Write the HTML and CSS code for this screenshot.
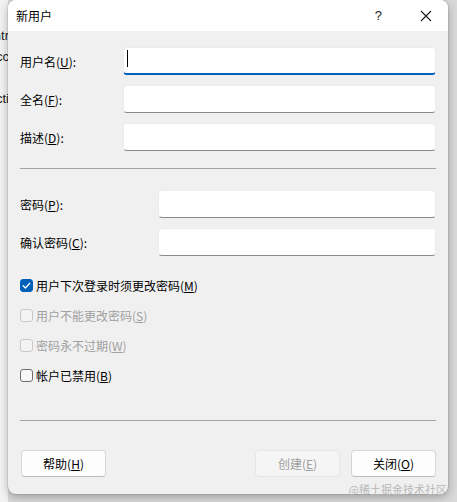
FILE: index.html
```html
<!DOCTYPE html>
<html lang="zh">
<head>
<meta charset="utf-8">
<link rel="stylesheet" href="styles.css">
</head>
<body>
<div class="stage">
  <div class="behind">
    <div class="frag f1"><span>Contr</span></div>
    <div class="frag f2"><span>Acc</span></div>
    <div class="frag f3"><span>Acti</span></div>
  </div>
  <div class="dialog">
    <div class="titlebar">
      <span class="title">新用户</span>
      <span class="help-q">?</span>
      <svg class="close" width="12" height="12" viewBox="0 0 12 12"><path d="M1 1L11 11M11 1L1 11" stroke="#1a1a1a" stroke-width="1.1" fill="none"/></svg>
    </div>
    <div class="body">
      <div class="fields">
        <div class="row"><label class="lbl">用户名(<u>U</u>):</label><div class="input focus"><span class="caret"></span></div></div>
        <div class="row"><label class="lbl">全名(<u>F</u>):</label><div class="input"></div></div>
        <div class="row"><label class="lbl">描述(<u>D</u>):</label><div class="input"></div></div>
      </div>
      <div class="sep sep1"></div>
      <div class="fields pw">
        <div class="row"><label class="lbl">密码(<u>P</u>):</label><div class="input"></div></div>
        <div class="row"><label class="lbl">确认密码(<u>C</u>):</label><div class="input"></div></div>
      </div>
      <div class="checks">
        <div class="chk"><span class="box checked"><svg width="11" height="11" viewBox="0 0 11 11"><path d="M2.2 5.8L4.4 8L8.8 3.2" stroke="#fff" stroke-width="1.3" fill="none" stroke-linecap="round" stroke-linejoin="round"/></svg></span><span>用户下次登录时须更改密码(<u>M</u>)</span></div>
        <div class="chk disabled"><span class="box"></span><span>用户不能更改密码(<u>S</u>)</span></div>
        <div class="chk disabled"><span class="box"></span><span>密码永不过期(<u>W</u>)</span></div>
        <div class="chk"><span class="box"></span><span>帐户已禁用(<u>B</u>)</span></div>
      </div>
      <div class="sep sep2"></div>
      <div class="buttons">
        <button class="btn">帮助(<u>H</u>)</button>
        <div class="spacer"></div>
        <button class="btn disabled">创建(<u>E</u>)</button>
        <button class="btn">关闭(<u>O</u>)</button>
      </div>
    </div>
  </div>
</div>
<div class="watermark">@稀土掘金技术社区</div>
</body>
</html>
```
FILE: styles.css
```css
html, body {
  margin: 0;
  padding: 0;
}
body {
  width: 457px;
  height: 502px;
  overflow: hidden;
  background: #d9d9d9;
  font-family: "Noto Sans CJK SC", "Noto Sans", sans-serif;
  font-size: 12px;
  color: #1a1a1a;
  position: relative;
}
.stage {
  display: flex;
  height: 502px;
}
.behind {
  width: 8px;
  flex: none;
  background: #f3f3f3;
  overflow: hidden;
  font-family: "Liberation Sans", sans-serif;
  font-size: 13px;
  line-height: 17px;
  color: #222;
}
.frag {
  display: flex;
  justify-content: flex-end;
  width: 8px;
  height: 17px;
  white-space: nowrap;
}
.frag span {
  flex: none;
  margin-right: -1px;
}
.f1 { margin-top: 27px; }
.f2 { margin-top: 4px; }
.f3 { margin-top: 25px; }
.dialog {
  width: 440px;
  height: 494px;
  flex: none;
  background: #f0f0f0;
  border-radius: 8px;
  box-shadow: 0 3px 10px rgba(0,0,0,0.28), 0 0 0 1px rgba(0,0,0,0.08);
  overflow: hidden;
  display: flex;
  flex-direction: column;
}
.titlebar {
  height: 31px;
  flex: none;
  background: #fff;
  display: flex;
  align-items: center;
  padding-left: 8px;
}
.title {
  flex: 1;
  font-size: 12px;
  color: #000;
}
.help-q {
  font-family: "Liberation Sans", sans-serif;
  font-size: 13px;
  margin-right: 38px;
  color: #1a1a1a;
}
.close {
  margin-right: 16px;
}
.body {
  flex: 1;
  padding: 16px 12px 0 12px;
  display: flex;
  flex-direction: column;
}
.fields {
  display: flex;
  flex-direction: column;
  gap: 10px;
}
.row {
  display: flex;
  align-items: center;
  height: 28px;
}
.lbl {
  width: 103px;
  flex: none;
  color: #000;
}
.pw .lbl {
  width: 138px;
}
.input {
  flex: 1;
  height: 28px;
  box-sizing: border-box;
  background: #fff;
  border: 1px solid #ececec;
  border-bottom: 1px solid #8a8a8a;
  border-radius: 4px;
  position: relative;
}
.input.focus {
  border-bottom: 2px solid #005fb8;
}
.caret {
  position: absolute;
  left: 3px;
  top: 2px;
  width: 1px;
  height: 17px;
  background: #000;
}
.sep {
  height: 1px;
  background: #a3a3a3;
  flex: none;
}
.sep1 {
  margin: 17px 0 21px 0;
}
.checks {
  margin-top: 14px;
  display: flex;
  flex-direction: column;
}
.chk {
  height: 30px;
  display: flex;
  align-items: center;
  color: #000;
}
.chk.disabled {
  color: #a0a0a0;
}
.box {
  width: 13px;
  height: 13px;
  box-sizing: border-box;
  border: 1px solid #6f6f6f;
  border-radius: 3px;
  background: #f8f8f8;
  margin-right: 3px;
  display: flex;
  align-items: center;
  justify-content: center;
}
.chk.disabled .box {
  border-color: #c8c8c8;
  background: #f4f4f4;
}
.box.checked {
  background: #005fb8;
  border-color: #005fb8;
}
.sep2 {
  margin-top: 30px;
}
.buttons {
  margin-top: 29px;
  display: flex;
  align-items: center;
  gap: 10px;
}
.spacer {
  flex: 1;
}
.btn {
  width: 85px;
  height: 27px;
  box-sizing: border-box;
  font-family: "Noto Sans CJK SC", "Noto Sans", sans-serif;
  font-size: 12px;
  color: #000;
  background: #fdfdfd;
  border: 1px solid #d6d6d6;
  border-bottom-color: #bcbcbc;
  border-radius: 4px;
  padding: 0;
  margin-left: 1px;
}
.btn.disabled {
  color: #9e9e9e;
  background: #f5f5f5;
  border-color: #e6e6e6;
}
.watermark {
  position: absolute;
  right: 10px;
  top: 482px;
  font-size: 11px;
  line-height: 14px;
  color: #b8b8b8;
  white-space: nowrap;
}
```
